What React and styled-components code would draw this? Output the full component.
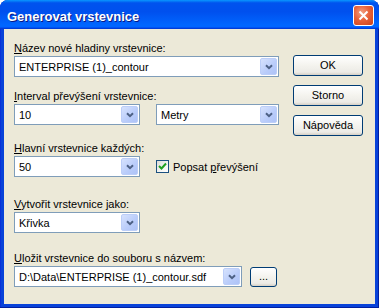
import styled, { createGlobalStyle } from "styled-components";

const GlobalStyle = createGlobalStyle`
  html, body {
    margin: 0;
    padding: 0;
    background: #ffffff;
  }
  body {
    font-family: "Liberation Sans", Arial, sans-serif;
    font-size: 11px;
    color: #000;
  }
`;

const Window = styled.div`
  width: 379px;
  height: 308px;
  box-sizing: border-box;
  display: flex;
  flex-direction: column;
  background: #0842d9;
  border-radius: 8px 8px 0 0;
  box-shadow: inset -1px -1px 0 #001ea0, inset 1px 0 0 #0831d9;
  overflow: hidden;
`;

const TitleBar = styled.div`
  height: 29px;
  box-sizing: border-box;
  display: flex;
  align-items: flex-start;
  justify-content: space-between;
  padding: 5px 5px 0 7px;
  background: linear-gradient(
    #0997ff 0%,
    #0053ee 10%,
    #0050ee 40%,
    #0066ff 86%,
    #0066ff 92%,
    #005bff 94%,
    #003dd7 97%,
    #003dd7 100%
  );
`;

const Title = styled.span`
  margin-top: 1px;
  line-height: 21px;
  font-size: 13px;
  font-weight: bold;
  color: #fff;
  text-shadow: 1px 1px 0 #0a1883;
`;

const CloseButton = styled.div`
  width: 21px;
  height: 21px;
  box-sizing: border-box;
  border: 1px solid #fff;
  border-radius: 3px;
  display: flex;
  align-items: center;
  justify-content: center;
  background: radial-gradient(
    circle at 40% 35%,
    #f2a184 0%,
    #e8623a 45%,
    #cc4118 100%
  );
`;

const Client = styled.div`
  flex: 1;
  margin: 0 4px 4px 4px;
  background: #ece9d8;
  display: flex;
  gap: 14px;
  padding: 13px 12px 0 10px;
`;

const LeftColumn = styled.div`
  width: 265px;
  display: flex;
  flex-direction: column;
`;

const ButtonColumn = styled.div`
  width: 70px;
  margin-top: 13px;
  display: flex;
  flex-direction: column;
  gap: 9px;
`;

const Field = styled.div`
  display: flex;
  flex-direction: column;
  gap: 1px;
  margin-top: ${(p) => p.$top || 0}px;
`;

const Label = styled.div`
  height: 13px;
  line-height: 13px;
  white-space: nowrap;
`;

const Row = styled.div`
  display: flex;
  align-items: center;
  gap: ${(p) => p.$gap || 16}px;
`;

const ComboBox = styled.div`
  width: ${(p) => p.$width}px;
  height: 21px;
  box-sizing: border-box;
  border: 1px solid #7f9db9;
  background: #fff;
  padding: 1px;
  display: flex;
  align-items: center;
`;

const ComboText = styled.span`
  flex: 1;
  padding-left: 3px;
  white-space: nowrap;
  overflow: hidden;
`;

const DropArrow = styled.div`
  width: 17px;
  height: 17px;
  box-sizing: border-box;
  border: 1px solid #bccef8;
  border-radius: 2px;
  background: linear-gradient(135deg, #d6e2fd 0%, #b9ccfa 60%, #aec3f7 100%);
  display: flex;
  align-items: center;
  justify-content: center;
`;

const Button = styled.div`
  height: ${(p) => p.$height || 21}px;
  width: ${(p) => (p.$width ? `${p.$width}px` : "auto")};
  box-sizing: border-box;
  border: 1px solid #003c74;
  border-radius: 3px;
  background: linear-gradient(#ffffff 0%, #f4f3ee 50%, #ecebe6 85%, #d6d0c5 100%);
  display: flex;
  align-items: center;
  justify-content: center;
  line-height: 13px;
`;

const CheckRow = styled.label`
  display: flex;
  align-items: center;
  gap: 4px;
  white-space: nowrap;
`;

const CheckBox = styled.div`
  width: 13px;
  height: 13px;
  box-sizing: border-box;
  border: 1px solid #1c5180;
  background: linear-gradient(135deg, #dcdcd7 0%, #f5f5f2 60%, #ffffff 100%);
  display: flex;
  align-items: center;
  justify-content: center;
`;

const Arrow = () => (
  <svg width="8" height="6" viewBox="0 0 8 6">
    <path d="M1 1.2 L4 4.2 L7 1.2" fill="none" stroke="#4d6185" strokeWidth="2" />
  </svg>
);

const Combo = ({ width, children }) => (
  <ComboBox $width={width}>
    <ComboText>{children}</ComboText>
    <DropArrow>
      <Arrow />
    </DropArrow>
  </ComboBox>
);

export default function App() {
  return (
    <>
      <GlobalStyle />
      <Window>
        <TitleBar>
          <Title>Generovat vrstevnice</Title>
          <CloseButton>
            <svg width="11" height="11" viewBox="0 0 11 11">
              <path d="M1.5 1.5 L9.5 9.5 M9.5 1.5 L1.5 9.5" stroke="#fff" strokeWidth="2" />
            </svg>
          </CloseButton>
        </TitleBar>
        <Client>
          <LeftColumn>
            <Field>
              <Label>
                <u>N</u>ázev nové hladiny vrstevnice:
              </Label>
              <Combo width={265}>ENTERPRISE (1)_contour</Combo>
            </Field>
            <Field $top={13}>
              <Label>
                <u>I</u>nterval převýšení vrstevnice:
              </Label>
              <Row>
                <Combo width={126}>10</Combo>
                <Combo width={123}>Metry</Combo>
              </Row>
            </Field>
            <Field $top={17}>
              <Label>
                <u>H</u>lavní vrstevnice každých:
              </Label>
              <Row>
                <Combo width={126}>50</Combo>
                <CheckRow>
                  <CheckBox>
                    <svg width="9" height="9" viewBox="0 0 9 9">
                      <path d="M1 4 L3.5 6.5 L8 1.5" fill="none" stroke="#21a121" strokeWidth="2" />
                    </svg>
                  </CheckBox>
                  <span>
                    Popsat <u>p</u>řevýšení
                  </span>
                </CheckRow>
              </Row>
            </Field>
            <Field $top={21}>
              <Label>
                <u>V</u>ytvořit vrstevnice jako:
              </Label>
              <Combo width={126}>Křivka</Combo>
            </Field>
            <Field $top={19}>
              <Label>
                <u>U</u>ložit vrstevnice do souboru s názvem:
              </Label>
              <Row $gap={8}>
                <Combo width={228}>D:\Data\ENTERPRISE (1)_contour.sdf</Combo>
                <Button $width={27} $height={20}>...</Button>
              </Row>
            </Field>
          </LeftColumn>
          <ButtonColumn>
            <Button>OK</Button>
            <Button>Storno</Button>
            <Button>Nápověda</Button>
          </ButtonColumn>
        </Client>
      </Window>
    </>
  );
}
